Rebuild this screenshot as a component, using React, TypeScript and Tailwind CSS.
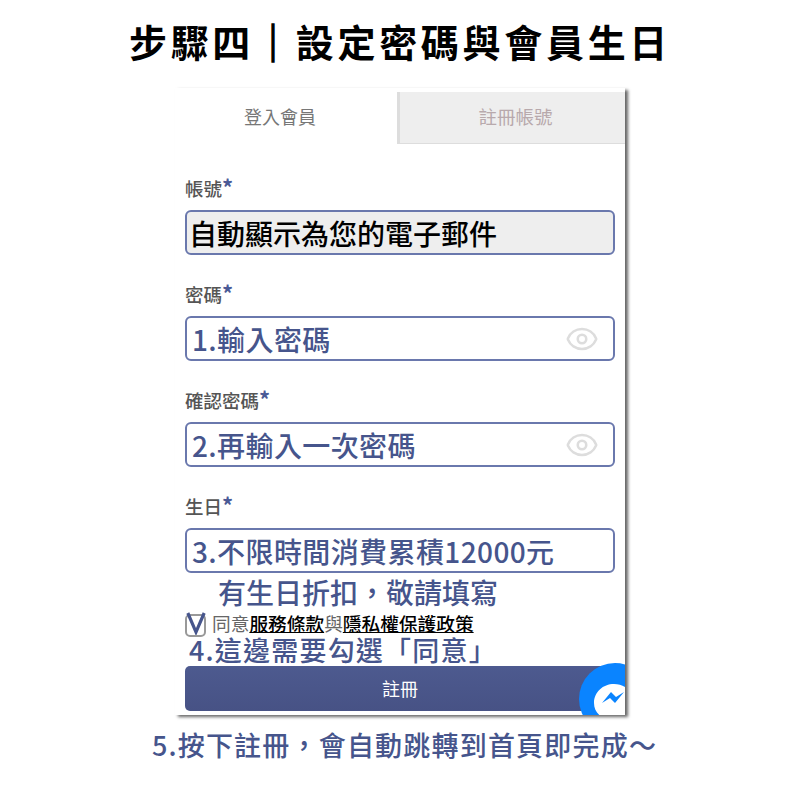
import { Eye } from 'lucide-react';

const CJK = "font-['Noto_Sans_CJK_TC','Liberation_Sans',sans-serif]";

// 表單欄位
function Campo({ label, texto, cinza, olho, tint }: { label: string; texto: string; cinza?: boolean; olho?: boolean; tint?: string }) {
  return (
    <div className="flex flex-col">
      <div className="flex h-[32px] items-start text-[18.5px] leading-[30px] font-medium text-[#555]">
        {label}
        <span className="text-[22px] leading-[26px] font-bold text-[#4a5a96]">*</span>
      </div>
      <div
        className={`mt-[5px] flex h-[45px] items-center justify-between rounded-[6px] border-2 border-[#6a78ad] pr-[14px] ${cinza ? 'bg-[#eeeeee] pl-[2px]' : 'bg-white pl-[5px]'}`}
      >
        <span className={`text-[28px] leading-none font-medium whitespace-nowrap ${tint ?? 'tracking-[0.4px] text-[#46558c]'}`}>{texto}</span>
        {olho && <Eye size={34} strokeWidth={1.8} className="text-[#dddddd]" />}
      </div>
    </div>
  );
}

export default function App() {
  return (
    <div className={`flex h-[800px] w-[800px] flex-col items-center bg-white ${CJK}`}>
      <h1 className="mt-[17px] h-[71px] text-[38px] leading-[48px] font-bold tracking-[3.7px] text-black">
        步驟四<span className="[-webkit-text-stroke:1.5px_black]">｜</span>設定密碼與會員生日
      </h1>

      <div className="flex h-[627px] w-[450px] flex-col overflow-hidden bg-white shadow-[3px_2px_3px_rgba(0,0,0,0.6)]">
        <div className="mt-[4px] flex h-[52px] shrink-0">
          <div className="flex w-[222px] items-center justify-center pr-[12px] pb-[4px] text-[18px] font-normal text-[#777]">登入會員</div>
          <div className="flex flex-1 items-center justify-center border-b border-l-[3px] border-[#dddddd] bg-[#eeeeee] pb-[2px] pl-[6px] text-[18.5px] font-normal text-[#b8a9ac]">
            註冊帳號
          </div>
        </div>

        <div className="flex flex-col gap-[24px] pt-[29px] pr-[10px] pl-[10px]">
          <Campo label="帳號" texto="自動顯示為您的電子郵件" cinza tint="text-black" />
          <Campo label="密碼" texto="1.輸入密碼" olho />
          <Campo label="確認密碼" texto="2.再輸入一次密碼" olho />
          <Campo label="生日" texto="3.不限時間消費累積12000元" />
        </div>

        <div className="mt-[1px] h-[36px] pl-[43px] text-[28px] leading-[36px] font-medium whitespace-nowrap text-[#46558c]">有生日折扣，敬請填寫</div>

        <div className="mt-[1px] flex h-[24px] items-center pl-[10px] text-[18.7px] font-normal whitespace-nowrap text-[#666]">
          <span className="relative mt-[4px] mr-[6px] h-[23px] w-[21px] rounded-[5px] border-2 border-[#999]">
            <svg viewBox="0 0 22 26" className="absolute top-[-5px] left-[-1px] h-[24px] w-[20px]" fill="none" stroke="#46558c" strokeWidth="3.5">
              <path d="M2 2 L11 23 L20 2" />
            </svg>
          </span>
          同意
          <span className="font-medium text-black underline">服務條款</span>與<span className="font-medium text-black underline">隱私權保護政策</span>
        </div>

        <div className="h-[31px] pl-[14px] text-[27px] leading-[29px] font-medium tracking-[1.2px] whitespace-nowrap text-[#46558c]">4.這邊需要勾選「同意」</div>

        <div className="relative mr-[10px] ml-[10px] flex h-[45px] shrink-0 items-center justify-center rounded-[5px] bg-gradient-to-b from-[#4d5a8f] to-[#475285] text-[18px] font-normal text-white">
          註冊
          <span className="absolute top-[-3px] left-[394px] flex h-[72px] w-[72px] items-center justify-center rounded-full bg-[#0a84ff]">
            <svg viewBox="0 0 72 72" className="h-[72px] w-[72px]">
              <path d="M35 21 C24 21 15 29 15 40 C15 46 18 51 23 54 V62 L31 58 C32 58 34 59 35 59 C46 59 55 51 55 40 C55 29 46 21 35 21 Z" fill="white" />
              <path d="M23 40 L32 29 L37 34 L45 29 L36 40 L31 35 Z" fill="#0a84ff" />
            </svg>
          </span>
        </div>
      </div>

      <div className="mt-[12px] pl-[9px] text-[27px] leading-[36px] font-medium tracking-[1.2px] whitespace-nowrap text-[#46558c]">5.按下註冊，會自動跳轉到首頁即完成～</div>
    </div>
  );
}
